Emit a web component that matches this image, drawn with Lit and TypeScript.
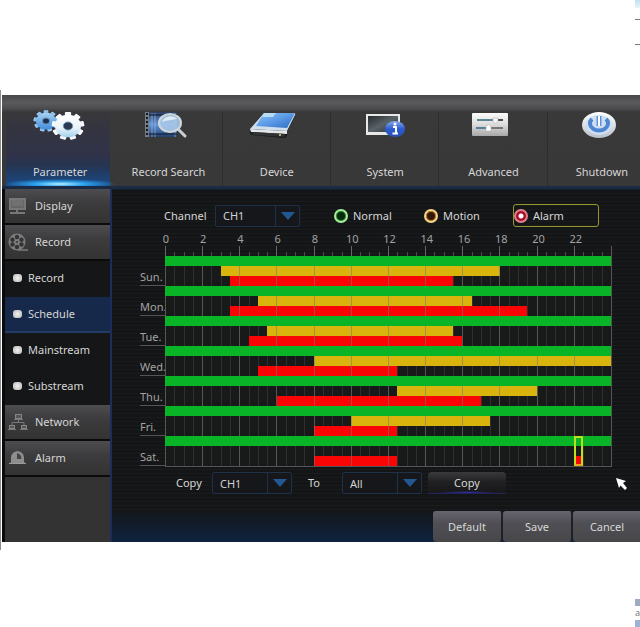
import { LitElement, html, css, svg } from "lit";
import { customElement, property, state } from "lit/decorators.js";
import { classMap } from "lit/directives/class-map.js";

type Span = [number, number];
interface Day {
  name: string;
  motion: Span[];
  alarm: Span[];
}

const DAYS: Day[] = [
  { name: "Sun.", motion: [[3, 18]], alarm: [[3.5, 15.5]] },
  { name: "Mon.", motion: [[5, 16.5]], alarm: [[3.5, 19.5]] },
  { name: "Tue.", motion: [[5.5, 15.5]], alarm: [[4.5, 16]] },
  { name: "Wed.", motion: [[8, 24]], alarm: [[5, 12.5]] },
  { name: "Thu.", motion: [[12.5, 20]], alarm: [[6, 17]] },
  { name: "Fri.", motion: [[10, 17.5]], alarm: [[8, 12.5]] },
  { name: "Sat.", motion: [], alarm: [[8, 12.5], [22, 22.5]] },
];

const HOURS = [0, 2, 4, 6, 8, 10, 12, 14, 16, 18, 20, 22];

const pct = (hours: number) => `${(hours / 24) * 100}%`;

const gear = (cx: number, cy: number, r: number, fill: string, hole: string) => svg`
  <g transform="translate(${cx} ${cy}) scale(1 0.86)">
    ${[0, 40, 80, 120, 160, 200, 240, 280, 320].map(
      (a) => svg`<rect x=${-r * 0.24} y=${-r * 1.25} width=${r * 0.48} height=${r * 0.6} rx="1" fill=${fill} transform="rotate(${a})"></rect>`
    )}
    <circle r=${r} fill=${fill}></circle>
    <circle r=${r * 0.36} fill=${hole} stroke="#6d93b8" stroke-width="1"></circle>
  </g>`;

const TOP_ICONS = {
  gears: html`<svg width="58" height="34" viewBox="0 0 58 34" aria-hidden="true">
    <defs>
      <linearGradient id="ga" x1="0" y1="0" x2="0" y2="1"><stop offset="0" stop-color="#a9d3f3"/><stop offset="1" stop-color="#3f8bdc"/></linearGradient>
      <linearGradient id="gb" x1="0" y1="0" x2="0" y2="1"><stop offset="0" stop-color="#ffffff"/><stop offset="0.6" stop-color="#e8f3f8"/><stop offset="1" stop-color="#9fd0ea"/></linearGradient>
    </defs>
    ${gear(15, 13, 10, "url(#ga)", "#1d3050")}
    ${gear(37, 18, 13, "url(#gb)", "#2c3850")}
  </svg>`,
  search: html`<svg width="50" height="30" viewBox="0 0 50 30" aria-hidden="true">
    <defs><linearGradient id="sa" x1="0" y1="0" x2="0" y2="1"><stop offset="0" stop-color="#2c3f60"/><stop offset="0.5" stop-color="#5f96dc"/><stop offset="1" stop-color="#25406e"/></linearGradient></defs>
    <rect x="2" y="2" width="32" height="25" fill="url(#sa)"/>
    <rect x="2" y="2" width="4" height="25" fill="#777c84"/>
    <path d="M4 3V27" stroke="#16181d" stroke-width="2" stroke-dasharray="2 2"/>
    <path d="M9 3V27M12 3V27M32 3V27" stroke="#9db6d8" stroke-width="1" opacity=".7"/>
    <path d="M6 5H34M6 24H34" stroke="#0d1524" stroke-width="1"/>
    <path d="M35 19L42 26" stroke="#c8d0d6" stroke-width="3" stroke-linecap="round"/>
    <ellipse cx="27" cy="13" rx="11" ry="9" fill="#a9c8e8" fill-opacity=".9" stroke="#cfd6d8" stroke-width="2"/>
    <path d="M19 12C21 6 29 4 34 9C30 10 24 10 19 12Z" fill="#edf5fb" opacity=".8"/>
  </svg>`,
  device: html`<svg width="60" height="28" viewBox="0 0 60 28" aria-hidden="true">
    <defs><linearGradient id="da" x1="0" y1="0" x2="1" y2="1"><stop offset="0" stop-color="#8fc3f5"/><stop offset="0.5" stop-color="#5a9ae6"/><stop offset="1" stop-color="#2e6bc2"/></linearGradient></defs>
    <path d="M17 2H46Q49 2 48 5L40 21V25Q39 27 37 27L5 24Q2 23 3 19Z" fill="#17191d"/>
    <path d="M17 2H46Q49 2 48 4L40 20L3 18Z" fill="#cfdfee"/>
    <path d="M17 2H46Q48 2 47 4L40 17L9 15Z" fill="url(#da)"/>
    <path d="M17 2H29L26 6H15Z" fill="#c9e6fb" opacity=".8"/>
    <path d="M3 18L40 20V23L4 21Z" fill="#e4e6e8"/>
    <path d="M5 21L38 23V26L6 24Z" fill="#303236"/>
    <circle cx="33" cy="24" r="1" fill="#e5d88a"/>
  </svg>`,
  system: html`<svg width="42" height="28" viewBox="0 0 42 28" aria-hidden="true">
    <defs>
      <linearGradient id="ya" x1="0" y1="0" x2="1" y2="1"><stop offset="0" stop-color="#272c2f"/><stop offset="0.5" stop-color="#596267"/><stop offset="1" stop-color="#2b3033"/></linearGradient>
      <linearGradient id="yb" x1="0" y1="0" x2="0" y2="1"><stop offset="0" stop-color="#88a9ee"/><stop offset="0.5" stop-color="#2c5bd0"/><stop offset="1" stop-color="#2a50b0"/></linearGradient>
    </defs>
    <rect x="2" y="3" width="34" height="21" fill="#e8e8e8"/>
    <rect x="4" y="5" width="30" height="16" fill="url(#ya)"/>
    <ellipse cx="31" cy="18" rx="10" ry="8" fill="url(#yb)"/>
    <circle cx="31" cy="13" r="1.5" fill="#fff"/>
    <path d="M29 16H32V22M28.500 22.500H34" fill="none" stroke="#fff" stroke-width="2"/>
  </svg>`,
  advanced: html`<svg width="44" height="26" viewBox="0 0 44 26" aria-hidden="true">
    <defs><linearGradient id="aa" x1="0" y1="0" x2="0" y2="1"><stop offset="0" stop-color="#fbfbfb"/><stop offset="0.5" stop-color="#dcdcdc"/><stop offset="1" stop-color="#a8a8a8"/></linearGradient></defs>
    <rect x="1" y="1" width="36" height="23" rx="1" fill="url(#aa)"/>
    <path d="M6 8H22" stroke="#5d8794" stroke-width="2"/>
    <path d="M27 8H32" stroke="#4c4c4c" stroke-width="2"/>
    <path d="M22 6H27V9L24.500 12L22 9Z" fill="#f6f6f6" stroke="#aaa" stroke-width=".5"/>
    <path d="M5 16H15" stroke="#537f9c" stroke-width="2"/>
    <path d="M20 16H32" stroke="#777" stroke-width="2"/>
    <path d="M15 19V15L17.500 12L20 15V19Z" fill="#fff" stroke="#aaa" stroke-width=".5"/>
  </svg>`,
  power: html`<svg width="44" height="28" viewBox="0 0 44 28" aria-hidden="true">
    <defs><linearGradient id="pa" x1="0" y1="0" x2="0" y2="1"><stop offset="0" stop-color="#fff"/><stop offset="1" stop-color="#b9c0c8"/></linearGradient></defs>
    <ellipse cx="19" cy="14" rx="17" ry="13" fill="url(#pa)"/>
    <ellipse cx="19" cy="14" rx="13" ry="10" fill="#cfdff2"/>
    <path d="M12 8A9 7 0 1 0 26 8" fill="none" stroke="#4d86d3" stroke-width="4"/>
    <path d="M19 5V15" stroke="#5c92dc" stroke-width="5"/>
    <path d="M19 5V15" stroke="#fff" stroke-width="2"/>
  </svg>`,
};

const SIDE_ICONS: Record<string, unknown> = {
  Display: html`<svg width="20" height="18" viewBox="0 0 20 18" aria-hidden="true">
    <rect x="1" y="1" width="17" height="12" fill="#777"/><rect x="3" y="3" width="13" height="8" fill="#666"/>
    <path d="M4 4H15M4 6H15M4 8H15" stroke="#7d7d7d"/><path d="M9 13V16M2 16H17" stroke="#777" stroke-width="2"/>
  </svg>`,
  Record: html`<svg width="20" height="18" viewBox="0 0 20 18" aria-hidden="true">
    <circle cx="9" cy="9" r="8.500" fill="#7c7c7c"/>
    <g fill="#343434"><circle cx="9" cy="4" r="2.200"/><circle cx="13.500" cy="6.700" r="2.200"/><circle cx="13.500" cy="11.500" r="2.200"/><circle cx="9" cy="14" r="2.200"/><circle cx="4.500" cy="11.500" r="2.200"/><circle cx="4.500" cy="6.700" r="2.200"/><circle cx="9" cy="9" r="1"/></g>
    <path d="M10 17H20" stroke="#7c7c7c" stroke-width="1.500"/>
  </svg>`,
  Network: html`<svg width="20" height="18" viewBox="0 0 20 18" aria-hidden="true">
    <g fill="#555" stroke="#858585"><rect x="7.500" y="1.500" width="6" height="4"/><rect x="1.500" y="12.500" width="5" height="3"/><rect x="13.500" y="12.500" width="5" height="3"/></g>
    <path d="M10.500 6V9M4 12V9.500H16V12M6 6.500H15M0 16.500H8M12 16.500H20" fill="none" stroke="#777"/>
  </svg>`,
  Alarm: html`<svg width="20" height="18" viewBox="0 0 20 18" aria-hidden="true">
    <path d="M3 13V9C3 0 16 0 16 9V13L18 15H1Z" fill="#8d8d8d"/>
    <path d="M9 4V10H13C14 7 12 5 9 4Z" fill="#444"/><path d="M1 14.500H18" stroke="#999"/>
  </svg>`,
};

const FONT = css`"Noto Sans", "Open Sans", sans-serif`;

@customElement("drop-down")
class DropDown extends LitElement {
  @property() name = "";
  @property({ type: Array }) options: string[] = [];

  static styles = css`
    :host { display: block; }
    .box { display: grid; grid-template-columns: 1fr 24px; height: 22px; box-sizing: border-box; border: 1px solid #1f3149; border-radius: 2px; background: #15171b; }
    .pick { grid-area: 1 / 1 / 2 / 3; appearance: none; width: 100%; margin: 0; border: 0; padding: 0 26px 0 7px; background: none; color: #d2d2d2; font: 11px ${FONT}; }
    .mark { grid-area: 1 / 2; border-left: 1px solid #1f3149; display: grid; place-items: center; pointer-events: none; }
  `;

  render() {
    return html`<div class="box">
      <select class="pick" aria-label=${this.name}>${this.options.map((o) => html`<option>${o}</option>`)}</select>
      <span class="mark"><svg width="14" height="8" viewBox="0 0 14 8" aria-hidden="true"><path d="M0 0H14L7 8Z" fill="#235791"/></svg></span>
    </div>`;
  }
}

@customElement("week-chart")
class WeekChart extends LitElement {
  static styles = css`
    :host { display: block; font: 11px/15px ${FONT}; color: #a3a3a3; }
    .row, .head { display: grid; grid-template-columns: 25px minmax(0, 1fr); }
    .hours { grid-column: 2; display: grid; grid-template-columns: repeat(12, minmax(0, 1fr)); height: 15px; }
    .hour { justify-self: start; width: 22px; margin-left: -10px; text-align: center; }
    .ticks {
      grid-column: 2; height: 10px; border-right: 1px solid #66505a;
      background:
        repeating-linear-gradient(90deg, #666 0 1px, transparent 1px calc(100% / 12)),
        repeating-linear-gradient(90deg, #4c4c4c 0 1px, transparent 1px calc(100% / 48)) 0 100% / 100% 4px no-repeat;
    }
    .name { box-sizing: border-box; height: 30px; padding-top: 13px; border-bottom: 1px solid #555; white-space: nowrap; overflow: hidden; }
    .track {
      position: relative; display: grid; grid-template-rows: repeat(3, 10px);
      background:
        repeating-linear-gradient(90deg, #2e2f30 0 1px, transparent 1px calc(100% / 48)),
        #181919;
      border-right: 1px solid #555;
    }
    .row:last-of-type .track { box-shadow: 0 1px #555; }
    .lane { position: relative; }
    .bar { position: absolute; top: 0; bottom: 0; }
    .normal { background: #09b526; left: 0; right: 0; }
    .motion { background: #d9b40c; }
    .alarm { background: #fa0505; }
    .over {
      position: absolute; top: 10px; bottom: 0; left: 0; right: 0;
      background: repeating-linear-gradient(90deg, #77777788 0 1px, transparent 1px calc(100% / 12));
    }
    .picked { position: absolute; top: 0; bottom: 0; box-sizing: border-box; border: 2px solid #b9e01c; border-bottom-color: #f0a01c; }
  `;

  private lane(kind: string, spans: Span[]) {
    return html`<div class="lane">${spans.map(
      ([a, b]) => html`<div class="bar ${kind}" style="left:${pct(a)};width:${pct(b - a)}"></div>`
    )}</div>`;
  }

  render() {
    return html`
      <div class="head">
        <div class="hours">${HOURS.map((h) => html`<span class="hour">${h}</span>`)}</div>
        <div class="ticks"></div>
      </div>
      ${DAYS.map((d) => html`<div class="row">
        <div class="name">${d.name}</div>
        <div class="track">
          <div class="lane"><div class="bar normal"></div></div>
          ${this.lane("motion", d.motion)}
          ${this.lane("alarm", d.alarm)}
          <div class="over"></div>
          ${d.name === "Sat." ? html`<div class="picked" style="left:${pct(22)};width:${pct(0.5)}"></div>` : null}
        </div>
      </div>`)}
    `;
  }
}

@customElement("app-root")
class AppRoot extends LitElement {
  @state() private kind = "Alarm";

  static styles = css`
    :host { display: block; position: relative; overflow: hidden; min-height: 100vh; box-sizing: border-box; padding-top: 90px; background: #fff; font: 11px/16px ${FONT}; color: #d6d6d6; }
    .frame { border-left: 1px solid #8c8c8c; padding: 5px 0 8px 1px; }
    .window { position: relative; background: #141516; overflow: hidden; }
    a { color: inherit; text-decoration: none; }

    .top { display: grid; grid-template-columns: repeat(6, minmax(0, 1fr)); height: 94px; box-sizing: border-box; padding-left: 4px; margin-right: -16px; border-bottom: 3px solid #1b2b45; background: linear-gradient(#47474a, #5a5a5e 8px, #4a4a4d 14px, #39393a 17px, #383838); }
    .tab { display: flex; flex-direction: column; align-items: center; justify-content: space-between; padding: 13px 0 6px; background: linear-gradient(#2e2e2f, #2e2e2f) 100% 100% / 1px 74px no-repeat; }
    .tab.on { background: radial-gradient(ellipse 56px 5px at 50% 89px, #bdf0ff, #2ba2ee 45%, transparent) no-repeat, linear-gradient(#0000 14px, #35353f 30px, #303249 60px, #263450 70px, #174c8c 92px) 0 0 / calc(100% - 4px) 100% no-repeat; }
    .pic { height: 34px; display: grid; place-items: center; }

    .body { display: grid; grid-template-columns: 110px minmax(0, 1fr); }
    .side { border-left: 3px solid #0a0a0a; border-right: 2px solid #1d2c58; background: #333; }
    .item { display: flex; align-items: center; gap: 7px; height: 36px; box-sizing: border-box; padding-left: 3px; border-bottom: 2px solid #0b0b0c; background: linear-gradient(#4d4d51, #3c3c3e 14px, #333); }
    .item.sub { gap: 6px; padding-left: 8px; background: #151617; border-bottom-color: #151617; }
    .item.sub.on { background: #16294a; border-bottom-color: #233c66; }
    .dot { width: 9px; height: 8px; border-radius: 3px; background: radial-gradient(#f2f2f2, #b4b4b4); }

    .main { display: flex; flex-direction: column; background: repeating-linear-gradient(#141516 0 3px, #1a1b1c 3px 4px); border-top: 1px solid #10212b; }
    .pick-row { display: flex; align-items: center; height: 23px; margin-top: 14px; padding-left: 52px; }
    .channel-label { width: 51px; }
    .channel { width: 85px; margin-right: 28px; }
    .kind { display: flex; align-items: center; gap: 5px; height: 23px; box-sizing: border-box; width: 90px; padding-left: 5px; border: 1px solid transparent; border-radius: 3px; }
    .kind.on { width: 86px; margin-left: 5px; padding-left: 0; border-color: #95962d; }
    .radio { appearance: none; flex: none; width: 14px; height: 14px; box-sizing: border-box; margin: 0; border-radius: 50%; border: 2px solid #a5ee9c; background: #0a2a0c; box-shadow: inset 0 0 0 1px #2c8a2c; }
    .radio.motion { border-color: #f4d488; background: #33180a; box-shadow: inset 0 0 0 1px #c47a1c; }
    .radio.alarm { border-color: #e0808c; background: radial-gradient(#fff 0 2px, #a5102a 3px); box-shadow: none; }
    .chart { margin: 4px 28px 0; }

    .copy-row { display: flex; align-items: center; margin: 6px 0 17px; padding-left: 64px; }
    .copy-label { width: 36px; }
    .copy-select { width: 80px; }
    .to-label { width: 34px; margin-left: 16px; }
    .copy { width: 78px; height: 22px; margin: 0 0 0 6px; padding: 0; border: 0; border-radius: 4px 4px 1px 1px; background: radial-gradient(ellipse 30px 2px at 50% 100%, #3232b8, transparent), linear-gradient(#3a3a3d, #202022 10px, #18181a); border-bottom: 1px solid #24245c; font: inherit; color: inherit; }

    .foot { display: flex; justify-content: flex-end; margin-top: auto; height: 31px; background: linear-gradient(#14171b, #0e2340); }
    .act { width: 70px; flex: none; margin: 0; padding: 0; border: 0; border-right: 2px solid #202024; border-radius: 3px 3px 4px 4px; background: linear-gradient(#67656f, #504f55 12px, #47474a); font: inherit; color: #d8d8d8; }
    .act:last-child { margin-right: -3px; }
    .cursor { position: absolute; left: calc(100% - 24px); bottom: 51px; }

    .edge { position: absolute; right: 0; width: 5px; }
    .sky { top: 0; height: 8px; background: linear-gradient(#bfe0f2, #eaf6fc); }
    .rule-a { top: 19px; height: 1px; background: #777; }
    .rule-b { top: 44px; height: 1px; background: #777; }
    .strips { top: 599px; font-size: 9px; line-height: 14px; color: #777; border-top: 7px solid #9dacc0; border-bottom: 7px solid #9db2d4; overflow: hidden; }
  `;

  private tab(label: string, icon: unknown, on = false) {
    return html`<a href="#" class=${classMap({ tab: true, on })}><span class="pic">${icon}</span><span>${label}</span></a>`;
  }

  private item(label: string) {
    return html`<a href="#" class="item">${SIDE_ICONS[label]}<span>${label}</span></a>`;
  }

  private sub(label: string, on = false) {
    return html`<a href="#" class=${classMap({ item: true, sub: true, on })}><span class="dot"></span><span>${label}</span></a>`;
  }

  private radio(label: string) {
    const on = this.kind === label;
    return html`<label class=${classMap({ kind: true, on })}>
      <input class="radio ${label.toLowerCase()}" type="radio" name="kind" .checked=${on} @change=${() => (this.kind = label)}>
      <span>${label}</span>
    </label>`;
  }

  render() {
    return html`
      <div class="edge sky"></div>
      <div class="edge rule-a"></div>
      <div class="edge rule-b"></div>
      <div class="frame">
        <div class="window">
          <nav class="top">
            ${this.tab("Parameter", TOP_ICONS.gears, true)}
            ${this.tab("Record Search", TOP_ICONS.search)}
            ${this.tab("Device", TOP_ICONS.device)}
            ${this.tab("System", TOP_ICONS.system)}
            ${this.tab("Advanced", TOP_ICONS.advanced)}
            ${this.tab("Shutdown", TOP_ICONS.power)}
          </nav>
          <div class="body">
            <nav class="side">
              ${this.item("Display")}
              ${this.item("Record")}
              ${this.sub("Record")}
              ${this.sub("Schedule", true)}
              ${this.sub("Mainstream")}
              ${this.sub("Substream")}
              ${this.item("Network")}
              ${this.item("Alarm")}
            </nav>
            <main class="main">
              <div class="pick-row">
                <span class="channel-label">Channel</span>
                <drop-down class="channel" name="Channel" .options=${["CH1", "CH2", "CH3", "CH4"]}></drop-down>
                ${["Normal", "Motion", "Alarm"].map((k) => this.radio(k))}
              </div>
              <week-chart class="chart"></week-chart>
              <div class="copy-row">
                <span class="copy-label">Copy</span>
                <drop-down class="copy-select" name="Copy" .options=${["CH1", "CH2", "CH3", "CH4"]}></drop-down>
                <span class="to-label">To</span>
                <drop-down class="copy-select" name="To" .options=${["All", "CH1", "CH2"]}></drop-down>
                <button class="copy">Copy</button>
              </div>
              <div class="foot">
                <button class="act">Default</button>
                <button class="act">Save</button>
                <button class="act">Cancel</button>
              </div>
            </main>
          </div>
          <svg class="cursor" width="12" height="13" viewBox="0 0 12 13" aria-hidden="true"><path d="M0 0L10 3L7 5L11 10L9 12L4.500 7.500L3 10Z" fill="#fff"/></svg>
        </div>
      </div>
      <div class="edge strips">a</div>
    `;
  }
}
